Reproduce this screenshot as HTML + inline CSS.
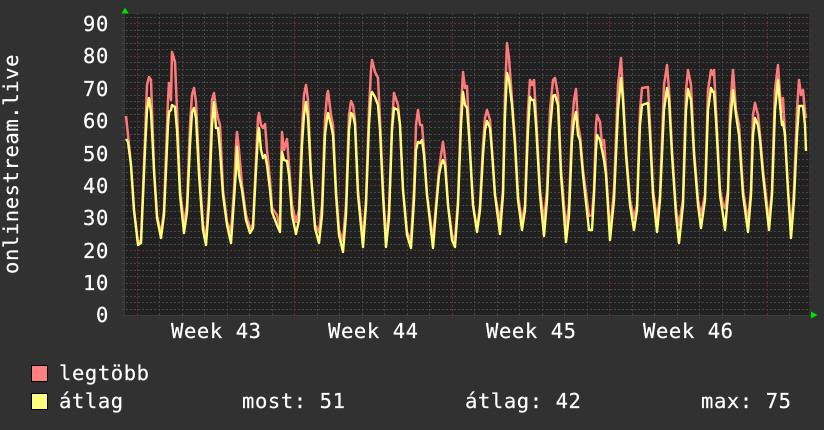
<!DOCTYPE html>
<html><head><meta charset="utf-8">
<style>
html,body{margin:0;padding:0;background:#313131;width:824px;height:430px;overflow:hidden}
svg{display:block}
text{font-family:"DejaVu Sans Mono","Liberation Mono",monospace;font-size:20.5px;fill:#fff;stroke:#fff;stroke-width:.2px;letter-spacing:.6px}
</style></head><body>
<svg id="s" xmlns="http://www.w3.org/2000/svg" width="824" height="430" viewBox="0 0 824 430">
<rect width="824" height="430" fill="#313131"/>
<rect x="124" y="14" width="685" height="301" fill="#212121"/>
<g id="grid" fill="none" stroke-width="1" shape-rendering="crispEdges"></g>
<path id="red" fill="none" stroke="#ff7b7b" stroke-width="2.5" stroke-linejoin="round"/>
<path id="yel" fill="none" stroke="#ffff7a" stroke-width="2.4" stroke-linejoin="round"/>
<polygon points="121.5,13.5 128.5,13.5 125,7.5" fill="#00e000"/>
<polygon points="811,311.5 817.5,315 811,318.5" fill="#00e000"/>
<text x="83" y="31">90</text><text x="83" y="63">80</text><text x="83" y="96">70</text><text x="83" y="128">60</text><text x="83" y="161">50</text><text x="83" y="193">40</text><text x="83" y="225">30</text><text x="83" y="258">20</text><text x="83" y="290">10</text><text x="96" y="322">0</text>
<text x="171" y="338">Week 43</text><text x="328" y="338">Week 44</text><text x="486" y="338">Week 45</text><text x="643" y="338">Week 46</text>
<text transform="translate(18,274) rotate(-90)">onlinestream.live</text>
<rect x="31.5" y="365.5" width="16" height="16" fill="#ff8080" stroke="#000"/>
<rect x="31.5" y="393.5" width="16" height="16" fill="#ffff80" stroke="#000"/>
<text x="59" y="380">legtöbb</text>
<text x="59" y="408">átlag</text>
<text x="242" y="408">most: 51</text>
<text x="465" y="408">átlag: 42</text>
<text x="701" y="408">max: 75</text>
</svg>
<script>
var g=document.getElementById('grid'),h='';
function L(x1,y1,x2,y2,c,d){h+='<line x1="'+x1+'" y1="'+y1+'" x2="'+x2+'" y2="'+y2+'" stroke="'+c+'" stroke-dasharray="'+d+'"/>';}
var v,x,i;
for(v=0;v<=46;v++){var yy=Math.round(315-v*6.48)+.5;if(yy<14)continue;
 if(v%5==0&&v>0)L(122,yy,811,yy,'#5e3434','2 2');else L(122,yy,811,yy,'#484848','2 2');}
for(i=0;i<31;i++){x=Math.round(136.5+i*22.5)+.5;if(x>809)break;
 if(i%7==0)L(x,13,x,318,'#5e3434','2 2');else L(x,13,x,318,'#484848','2 2');}
L(122,315.5,811,315.5,'#3d3d3d','none');L(124.5,14,124.5,318,'#3a3a3a','none');
g.innerHTML=h;
var a=[[126,116,139],[128,135,142],[131,165,165],[134,210,210],[138,243,245],[141,240,243],[145,140,150],[147,85,110],[149,77,98],[151,80,112],[154,170,170],[157,215,218],[161,235,238],[164,210,215],[168,100,125],[169,83,112],[171,100,110],[172,52,105],[175,62,107],[177,110,130],[180,190,195],[184,224,233],[187,205,212],[190,125,145],[192,95,112],[194,88,108],[196,102,118],[199,165,175],[203,225,230],[206,238,245],[209,195,205],[212,100,125],[214,93,102],[216,108,128],[218,118,128],[220,125,150],[223,190,195],[227,222,225],[231,232,243],[234,190,200],[236,145,170],[237,132,147],[239,150,175],[242,185,190],[246,215,220],[250,228,233],[253,225,228],[256,160,170],[258,118,135],[259,113,128],[261,125,150],[263,128,158],[265,124,155],[267,150,165],[270,180,190],[272,208,212],[277,215,225],[280,228,232],[281,170,180],[282,132,152],[284,150,160],[287,139,161],[289,165,175],[292,205,215],[296,222,234],[299,210,220],[302,130,145],[304,95,115],[306,85,102],[308,100,118],[311,175,175],[315,225,228],[319,232,243],[322,205,215],[325,120,135],[327,95,118],[328,91,113],[331,115,125],[333,125,135],[336,190,195],[339,230,235],[343,241,252],[346,205,215],[349,115,130],[351,101,113],[353,105,115],[355,120,125],[358,190,195],[363,240,247],[366,200,205],[369,110,125],[371,70,95],[372,60,92],[375,72,97],[378,78,105],[380,120,130],[383,190,195],[386,240,247],[389,210,218],[392,125,130],[394,93,108],[398,105,110],[400,125,125],[403,190,190],[407,232,235],[411,240,248],[414,190,200],[416,125,150],[418,110,142],[420,125,143],[422,125,140],[424,150,155],[427,195,195],[433,240,248],[436,205,210],[439,170,175],[441,155,165],[443,142,160],[445,158,165],[448,205,205],[452,235,240],[455,240,247],[458,200,205],[461,110,125],[463,72,92],[465,88,105],[467,86,108],[469,130,135],[473,205,205],[477,230,232],[480,205,210],[483,145,155],[485,118,130],[487,110,121],[490,120,128],[492,150,152],[495,195,195],[500,222,234],[503,190,195],[505,95,115],[507,43,73],[509,58,80],[512,100,105],[515,140,145],[518,195,200],[522,222,230],[525,205,210],[528,110,130],[530,80,97],[532,85,100],[534,80,100],[536,115,125],[540,190,195],[544,222,236],[547,190,200],[550,110,130],[553,80,96],[555,78,95],[558,95,105],[561,170,175],[566,228,242],[569,205,215],[572,125,140],[574,100,120],[576,89,112],[578,125,135],[580,135,140],[583,170,175],[589,216,230],[592,215,230],[594,190,195],[596,125,150],[597,115,135],[600,122,140],[602,145,150],[604,140,160],[606,170,175],[610,233,240],[614,190,200],[618,85,110],[621,58,78],[623,95,100],[626,150,155],[630,200,205],[634,218,230],[637,205,210],[640,110,125],[642,88,105],[648,87,103],[650,125,135],[653,190,195],[657,220,232],[660,195,200],[664,85,110],[667,65,88],[669,90,100],[672,150,155],[676,210,215],[679,225,243],[683,200,205],[686,90,110],[688,70,89],[691,85,100],[694,150,155],[698,200,205],[701,215,228],[705,195,200],[708,90,110],[711,70,88],[713,75,92],[714,70,92],[716,110,120],[720,190,195],[723,205,215],[725,208,230],[728,190,195],[730,110,125],[733,70,90],[736,110,115],[739,125,135],[743,190,195],[748,222,232],[751,190,195],[753,115,135],[755,103,118],[758,115,125],[760,135,140],[763,170,175],[769,222,230],[772,190,195],[775,90,110],[778,65,80],[780,95,105],[782,112,125],[783,98,122],[785,135,135],[788,190,190],[791,232,238],[794,190,200],[797,110,135],[799,80,106],[801,95,106],[803,90,106],[805,112,125],[806,118,151]];
function P(k){var d='';for(var j=0;j<a.length;j++){d+=(j?'L':'M')+a[j][0]+' '+a[j][k];}return d;}
document.getElementById('red').setAttribute('d',P(1));
document.getElementById('yel').setAttribute('d',P(2));
</script>
</body></html>
